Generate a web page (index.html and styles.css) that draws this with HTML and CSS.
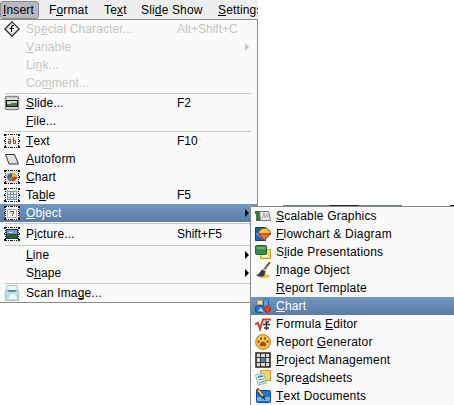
FILE: index.html
```
<!DOCTYPE html>
<html lang="en">
<head>
<meta charset="utf-8">
<title>Insert menu</title>
<link rel="stylesheet" href="styles.css">
</head>
<body>
<svg width="0" height="0" class="defs">
  <defs>
    <g id="frame" shape-rendering="crispEdges"><path d="M2 1.500h12M2 14.500h12M1.500 2v12M14.500 2v12" fill="none" stroke="#111" stroke-dasharray="1 1"/><path d="M0 1h2v2H0zM7 1h2v1H7zM14 1h2v2h-2zM0 7h1v2H0zM15 7h1v2h-1zM0 13h2v2H0zM7 14h2v1H7zM14 13h2v2h-2z" fill="#111"/></g>
  </defs>
</svg>
<nav class="bar"><span class="tab on w-insert"><u>I</u>nsert</span><span class="tab w-format">F<u>o</u>rmat</span><span class="tab w-text">Te<u>x</u>t</span><span class="tab w-show">Sli<u>d</u>e Show</span><span class="tab"><u>S</u>ettings</span></nav>
<main class="menu">
  <div class="row off"><svg class="icon" viewBox="0 0 16 16"><path d="M8 .8 15.2 8 8 15.2.8 8z" fill="#fff" stroke="#222" stroke-width="1.2"/><path d="M8 2.500 2.500 8 8 13.500 13.500 8" fill="none" stroke="#aaa"/><path d="M10 4.500H8.500L7.500 5.500V11M5.500 7.500H10" fill="none" stroke="#000" stroke-width="1.2"/></svg><span class="label">Sp<u>e</u>cial Character...</span><span class="key">Alt+Shift+C</span></div>
  <div class="row off"><i class="icon"></i><span class="label"><u>V</u>ariable</span><i class="arrow"></i></div>
  <div class="row off"><i class="icon"></i><span class="label">Li<u>n</u>k...</span></div>
  <div class="row off"><i class="icon"></i><span class="label">Co<u>m</u>ment...</span></div>
  <hr>
  <div class="row"><svg class="icon" viewBox="0 0 16 16"><rect x="1.500" y="1.500" width="13" height="13" rx="1.500" fill="#ddd" stroke="#888a85" stroke-width="1.500"/><path d="M2 5h12v7H2z" fill="#111"/><path d="M3 6h10v2H3z" fill="#b9d7dc"/><path d="M3 8h10v3H3z" fill="#3c8045"/><path d="M3 8h4v1H3z" fill="#d8d9a0"/></svg><span class="label"><u>S</u>lide...</span><span class="key">F2</span></div>
  <div class="row"><i class="icon"></i><span class="label"><u>F</u>ile...</span></div>
  <hr>
  <div class="row"><svg class="icon" viewBox="0 0 16 16"><use href="#frame"/><path d="M3 4h10v8H3z" fill="#f3efec"/><path d="M4 6.500h2.500v4h-2v-2h2M9.500 4.500v6h2v-3h-2" fill="none" stroke="#68554c"/></svg><span class="label"><u>T</u>ext</span><span class="key">F10</span></div>
  <div class="row"><svg class="icon" viewBox="0 0 16 16"><path d="M1.500 3.500h9L14.500 13H5z" fill="#e2e4df" stroke="#333"/></svg><span class="label"><u>A</u>utoform</span></div>
  <div class="row"><svg class="icon" viewBox="0 0 16 16"><use href="#frame"/><path d="M2 2h12v12H2z" fill="#ddd"/><use href="#frame"/><ellipse cx="8" cy="8" rx="5" ry="4" fill="#3467a4"/><path d="M8 8V4c3 0 5 2 5 4z" fill="#eab21b"/><path d="M8 8h5c0 2-2 4-5 4z" fill="#d43c20"/><path d="m4 9 4-1v3z" fill="#79a52d"/></svg><span class="label"><u>C</u>hart</span></div>
  <div class="row"><svg class="icon" viewBox="0 0 16 16"><use href="#frame"/><path d="M3 3h10v10H3z" fill="#e9edf0"/><path d="M3 4.500h10M3 7.500h10M3 10.500h10M3 12.500h10M3.500 4v9M6.500 4v9M9.500 4v9M12.500 4v9" stroke="#8594a5"/></svg><span class="label">Ta<u>b</u>le</span><span class="key">F5</span></div>
  <div class="row hot"><svg class="icon" viewBox="0 0 16 16"><path d="M1 1h14v14H1z" fill="#f5f5f5"/><use href="#frame"/><path d="M3.500 4.500h9v8h-9z" fill="#f7f5f1" stroke="#b5afa6"/><path d="M6.500 7.500v-1h3v2h-1v1M8.500 10v1" fill="none" stroke="#444"/></svg><span class="label"><u>O</u>bject</span><i class="arrow"></i></div>
  <hr>
  <div class="row tall"><svg class="icon" viewBox="0 0 16 16"><use href="#frame"/><path d="M2 3h12v10H2z" fill="#193968"/><path d="M3 4h10v4H3z" fill="#739acb"/><path d="m3 9 3-2 3 2 4-1v4H3z" fill="#2e6330"/><path d="M5 6h3v1H5z" fill="#eee"/></svg><span class="label">P<u>i</u>cture...</span><span class="key">Shift+F5</span></div>
  <hr>
  <div class="row"><i class="icon"></i><span class="label"><u>L</u>ine</span><i class="arrow"></i></div>
  <div class="row"><i class="icon"></i><span class="label">S<u>h</u>ape</span><i class="arrow"></i></div>
  <hr>
  <div class="row"><svg class="icon" viewBox="0 0 16 16"><path d="M3 .5h10l1 5H2z" fill="#e5f5fc" stroke="#b9c3c4"/><path d="M1.500 5.500h13v10h-13z" fill="#b9def0" stroke="#b5bcbb"/><path d="M3 5h10l-2 2H5z" fill="#6e7f7d"/><path d="m4 14 3-5h4l2 5z" fill="#edfaff"/></svg><span class="label">Scan Ima<u>g</u>e...</span></div>
</main>
<div class="behind"><i class="ink a"></i><i class="ink b"></i><i class="ink c"></i></div>
<aside class="submenu">
  <div class="row"><svg class="icon" viewBox="0 0 16 16"><path d="M0 3h5v3H0zM1 6h4v7H1z" fill="#347b43"/><path d="M4.500 3.500h9l2 9h-10z" fill="#e7e9e4" stroke="#777"/><path d="m7 11 2-6 1 5 2-4 1 4" fill="none" stroke="#aaa"/></svg><span class="label"><u>S</u>calable Graphics</span></div>
  <div class="row"><svg class="icon" viewBox="0 0 16 16"><path d="M.5 1.500h10v13H.5z" fill="#1764bd" stroke="#0a438b"/><path d="m1 8 8-6v12z" fill="#69b2ed"/><path d="M3.500 8a6 6 0 0 1 12 0z" fill="#ffc735" stroke="#8d401a"/><path d="M3.500 8h12l-6 6.500z" fill="#ee6b32" stroke="#9a3819"/></svg><span class="label"><u>F</u>lowchart &amp; Diagram</span></div>
  <div class="row"><svg class="icon" viewBox="0 0 16 16"><path d="M5.500 5.500h10v9h-10z" fill="#ffdc56" stroke="#cb9720"/><rect x=".5" y="1.500" width="11" height="9" rx="1" fill="#398d45" stroke="#226332"/><path d="M2 3h8v2H2z" fill="#6fb477"/><path d="m7 11 1 2h5v-2" fill="#fff"/></svg><span class="label">S<u>l</u>ide Presentations</span></div>
  <div class="row"><svg class="icon" viewBox="0 0 16 16"><ellipse cx="9" cy="14" rx="6" ry="2" fill="#edc04b"/><path d="M15 0 9 8" stroke="#8a4c1c" stroke-width="2"/><path d="m8 7 3 2-2 5c-2 1-5 1-8-1 3 0 4-4 7-6z" fill="#333b43"/><path d="m8 7 3 2" stroke="#b9c3ca" stroke-width="2"/></svg><span class="label"><u>I</u>mage Object</span></div>
  <div class="row"><i class="icon"></i><span class="label"><u>R</u>eport Template</span></div>
  <div class="row hot"><svg class="icon" viewBox="0 0 16 16"><path d="M2.500 2.500h5v4h-5z" fill="#ffe4a0" stroke="#d79b42"/><rect x=".5" y="7.500" width="8" height="7" rx="2" fill="#1f71c7" stroke="#165298"/><path d="M8.500 3c0-3 5-3 5 0v9h-5z" fill="#48a5ea" stroke="#1763ad"/><circle cx="12.500" cy="11" r="3.200" fill="#e74928" stroke="#9a2c1b"/><path d="m3 13 3-4 3 5z" fill="#a2d7ff"/></svg><span class="label"><u>C</u>hart</span></div>
  <div class="row"><svg class="icon" viewBox="0 0 16 16"><path d="m0 8 3-1 2 6L8 3.500h8" fill="none" stroke="#c8452b" stroke-width="2"/><path d="M8 8.500h7M10 6h4M11.500 6v8M9 12h5" stroke="#333" stroke-width="1.300"/></svg><span class="label">Formula <u>E</u>ditor</span></div>
  <div class="row"><svg class="icon" viewBox="0 0 16 16"><circle cx="8" cy="8" r="7.300" fill="#ffcb52" stroke="#d48a22" stroke-width="1.300"/><path d="M8 7.500c2 0 4 3 3 4.500-1 1-2 0-3 0s-2 1-3 0c-1-1.500 1-4.500 3-4.500z" fill="#a44a16"/><g fill="#a44a16"><ellipse cx="3.500" cy="7.500" rx="1.100" ry="1.600"/><ellipse cx="6" cy="4.500" rx="1.100" ry="1.600"/><ellipse cx="10" cy="4.500" rx="1.100" ry="1.600"/><ellipse cx="12.500" cy="7.500" rx="1.100" ry="1.600"/></g></svg><span class="label">Report <u>G</u>enerator</span></div>
  <div class="row"><svg class="icon" viewBox="0 0 16 16"><path d="M1 1h14v14H1z" fill="#dedbd0" stroke="#222" stroke-width="1.500"/><path d="M6 6h4v4H6z" fill="#5686b1"/><path d="M1 5.500h14M1 10.500h14M5.500 1v14M10.500 1v14" stroke="#333"/></svg><span class="label"><u>P</u>roject Management</span></div>
  <div class="row"><svg class="icon" viewBox="0 0 16 16"><path d="M5.500.5h10v10h-10z" fill="#f8d35b" stroke="#ce9642"/><path d="m.5 5 8-2 3 10-8 2z" fill="#e2f0ee" stroke="#93b7b9"/><path d="m3 7 5-1" stroke="#3f96b5" stroke-width="2"/><path d="m4 10 5-1M4 13l6-2" stroke="#65a478"/></svg><span class="label">Spre<u>a</u>dsheets</span></div>
  <div class="row"><svg class="icon" viewBox="0 0 16 16"><rect x="1.500" y="2.500" width="14" height="12" rx="1" fill="#2276cf" stroke="#0c4b99"/><path d="M2 9h13v4H2z" fill="#61b4ef"/><path d="m2 1 7 9" stroke="#333" stroke-width="3.500"/><path d="m3 2 5 6" stroke="#eec377" stroke-width="2"/><path d="m8 8 2 4" stroke="#222"/></svg><span class="label"><u>T</u>ext Documents</span></div>
</aside>
</body>
</html>
```
FILE: styles.css
```
body {
  margin: 0;
  width: 454px;
  height: 405px;
  overflow: hidden;
  background: #fff;
  font: 12px/18px "Liberation Sans", sans-serif;
  color: #000;
}
.defs { position: absolute; }
u { text-decoration: none; box-shadow: 0 1px currentColor; display: inline-block; height: 12px; line-height: 14px; }
.bar {
  display: flex;
  box-sizing: border-box;
  width: 258px;
  height: 19px;
  padding-top: 1px;
  overflow: hidden;
  background: #eee;
  white-space: nowrap;
}
.tab { flex: none; box-sizing: border-box; padding-left: 3px; letter-spacing: .15px; }
.on { border: 1px solid #8b8b91; border-radius: 3px; background: #bab9c0; line-height: 16px; padding-left: 2px; }
.w-insert { width: 39px; margin-right: 7px; }
.w-format { width: 55px; }
.w-text { width: 37px; }
.w-show { width: 77px; }
.menu {
  box-sizing: border-box;
  width: 258px;
  height: 284px;
  border: solid #888a85;
  border-width: 1px 1px 1px 0;
  background: #fafafa;
}
.row { display: flex; align-items: center; height: 18px; white-space: nowrap; letter-spacing: .12px; }
.tall { height: 20px; }
.icon { flex: none; width: 16px; height: 16px; margin: 0 6px 0 4px; }
.menu .label { width: 151px; }
.key { width: 66px; letter-spacing: 0; }
.arrow { margin-left: 68px; border: solid transparent; border-width: 4px 0 4px 4px; border-left-color: #000; }
.off { color: #c4c6c2; }
.off .arrow { border-left-color: #c4c6c2; }
.hot { color: #fff; background: linear-gradient(#7198c1, #587da6); }
hr { height: 1px; margin: 1px 6px 0 5px; border: 0; background: #c4c6c2; }
.behind {
  position: absolute;
  left: 283px;
  top: 205px;
  width: 171px;
  height: 1px;
  display: flex;
}
.ink { height: 1px; background: #6d7f86; }
.a { width: 47px; }
.b { width: 28px; background: #20262b; }
.c { width: 44px; margin-right: 48px; }
.behind::after { content: ""; width: 4px; background: #222; }
.submenu {
  position: absolute;
  left: 250px;
  top: 206px;
  width: 203px;
  height: 199px;
  border: solid #888a85;
  border-width: 1px 0 0 1px;
  background: #fafafa;
}
.submenu .icon { margin-right: 5px; }
.submenu .row { letter-spacing: .2px; }
```
